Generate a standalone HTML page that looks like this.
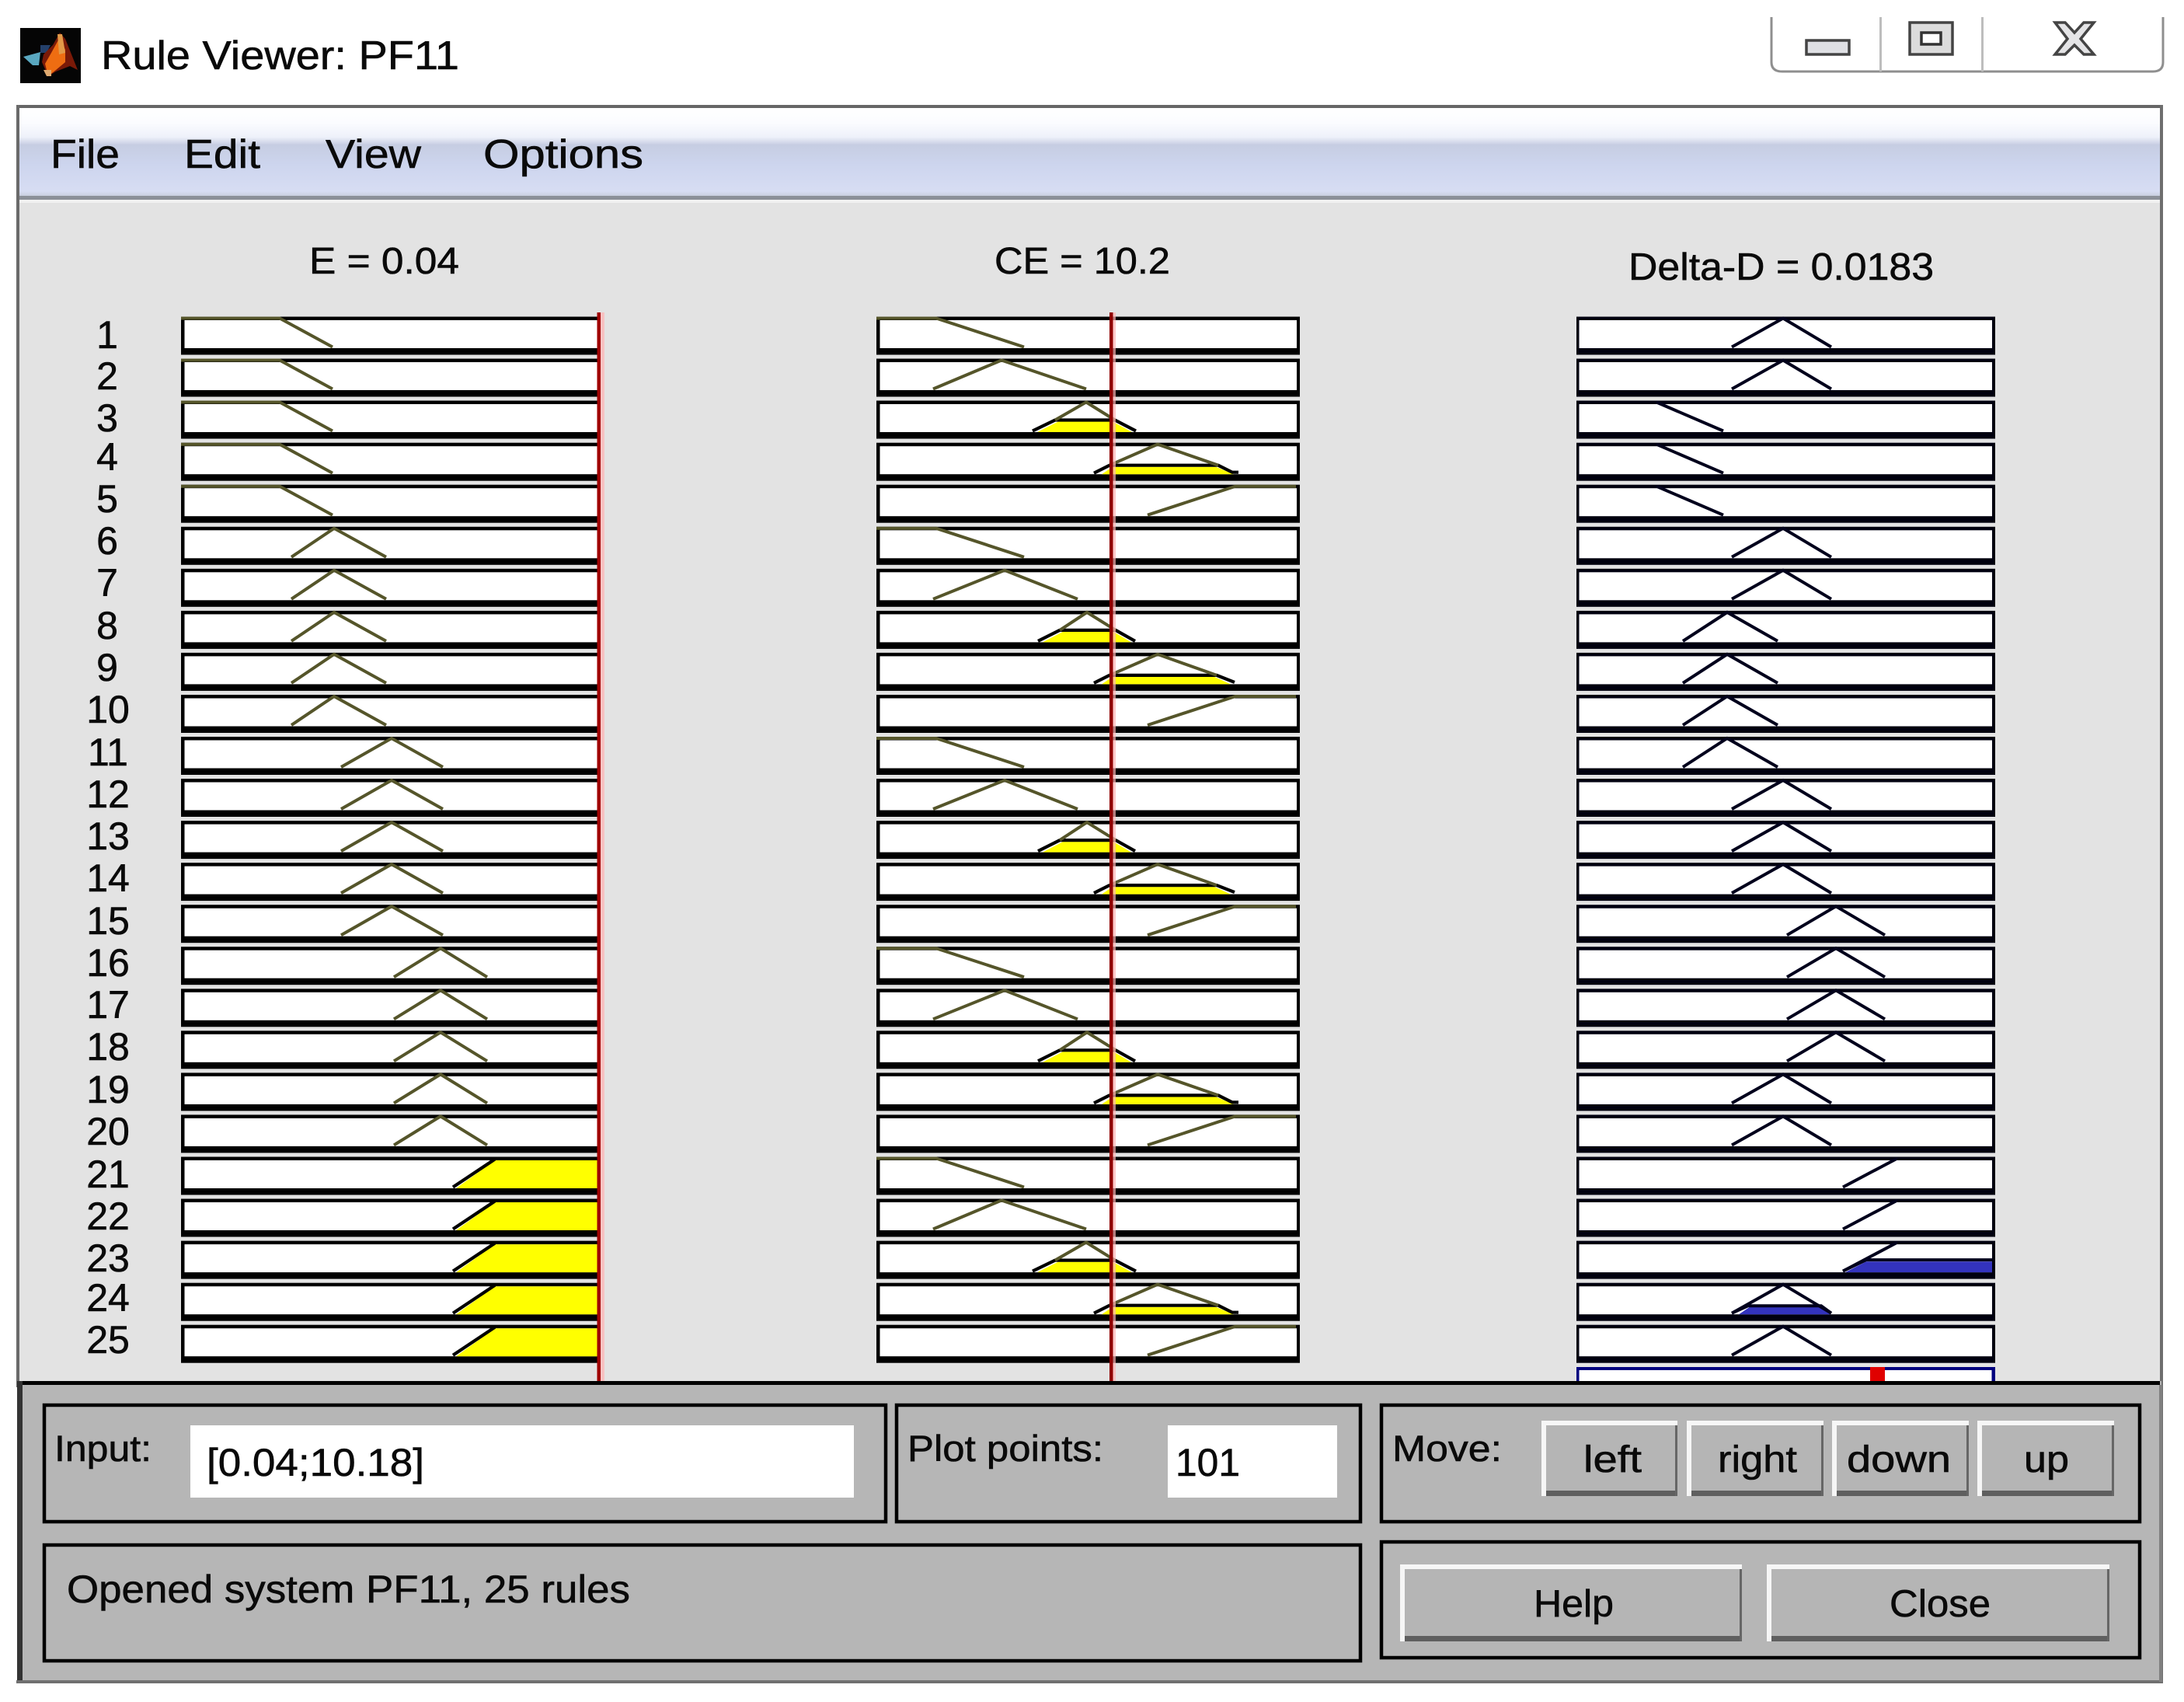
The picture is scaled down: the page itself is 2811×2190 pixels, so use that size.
<!DOCTYPE html>
<html>
<head>
<meta charset="utf-8">
<title>Rule Viewer: PF11</title>
<style>
html,body{margin:0;padding:0;background:#fff;width:2811px;height:2190px;overflow:hidden}
svg{display:block}
text{font-family:"Liberation Sans",sans-serif;fill:#0a0a0a;stroke:#0a0a0a;stroke-width:.6}
.ol{fill:none;stroke:#55552a;stroke-width:4;stroke-linejoin:miter}
.bk{fill:none;stroke:#000;stroke-width:4.2}
.nv{fill:none;stroke:#00001c;stroke-width:4}
.y{fill:#ffff00}
.b{fill:#3333bd}
.n{font-size:50px;text-anchor:middle}
</style>
</head>
<body>
<svg width="2811" height="2190" viewBox="0 0 2811 2190" xmlns="http://www.w3.org/2000/svg">
<defs>
<linearGradient id="menu" x1="0" y1="0" x2="0" y2="1">
<stop offset="0" stop-color="#ffffff"/>
<stop offset=".17" stop-color="#fbfcff"/>
<stop offset=".33" stop-color="#eef1fa"/>
<stop offset=".42" stop-color="#c6cde2"/>
<stop offset=".65" stop-color="#cdd5ee"/>
<stop offset=".95" stop-color="#d7ddf3"/>
<stop offset="1" stop-color="#c8cedd"/>
</linearGradient>
<g id="f">
<rect x="233" y="0" width="537" height="49" fill="#000"/><rect x="237.500" y="4.500" width="532" height="36" fill="#fff"/>
<rect x="1128" y="0" width="545" height="49" fill="#000"/><rect x="1132.500" y="4.500" width="536.500" height="36" fill="#fff"/>
<rect x="2029" y="0" width="539" height="49" fill="#00000f"/><rect x="2032.500" y="4.500" width="531.500" height="36" fill="#fff"/>
</g>
<polyline id="LZ" class="ol" points="233,2 360,2 428,39"/>
<polyline id="L1" class="ol" points="375,39 430,2 497,39"/>
<polyline id="L2" class="ol" points="439,39 504,2 570,39"/>
<polyline id="L3" class="ol" points="507,39 567,2 627,39"/>
<g id="L4"><polygon class="y" points="587,40.500 637,4.500 770,4.500 770,40.500"/><polyline class="bk" points="583,39 637,3"/></g>
<polyline id="MZ" class="ol" points="1128,2 1205,2 1318,39"/>
<polyline id="M2a" class="ol" points="1201,39 1289,2 1398,39"/>
<polyline id="M2b" class="ol" points="1201,39 1293,2 1387,39"/>
<g id="M3a"><polygon class="y" points="1335,40.500 1362,27 1432,27 1457,40.500"/><polyline class="bk" points="1329,39 1358,25 1435,25 1462,39"/><polyline class="ol" points="1358,25 1398,2 1435,25"/></g>
<g id="M3b"><polygon class="y" points="1342,40.500 1368,27 1433,27 1456,40.500"/><polyline class="bk" points="1336,39 1364,25 1436,25 1461,39"/><polyline class="ol" points="1364,25 1399,2 1436,25"/></g>
<g id="M4a"><polygon class="y" points="1418,40.500 1432,31 1565,31 1588,40.500"/><polyline class="bk" points="1408,39 1428,29 1568,29 1586,38 1594,38"/><polyline class="ol" points="1428,29 1490,2 1568,29"/></g>
<g id="M4b"><polygon class="y" points="1418,40.500 1432,31 1563,31 1584,40.500"/><polyline class="bk" points="1408,39 1428,29 1566,29 1589,38"/><polyline class="ol" points="1428,29 1490,2 1566,29"/></g>
<polyline id="M5" class="ol" points="1477,39 1590,2 1668,2"/>
<polyline id="RC" class="nv" points="2229,39 2295,2 2357,39"/>
<polyline id="RZ" class="nv" points="2132,2 2218,39"/>
<polyline id="RL" class="nv" points="2166,39 2223,2 2288,39"/>
<polyline id="RR" class="nv" points="2300,39 2363,2 2426,39"/>
<polyline id="RS" class="nv" points="2372,39 2442,2"/>
</defs>

<rect width="2811" height="2190" fill="#fff"/>

<!-- title bar -->
<rect x="26" y="36" width="78" height="71" fill="#050505"/>
<polygon points="52,58 65,58 60,68 52,68" fill="#24406a"/>
<polygon points="30,73 52,67 50,84 42,84" fill="#5aa8c0"/>
<polygon points="77,42 84,50 100,90 90,85 72,92 62,98 54,80 56,70 68,58" fill="#7a1a08"/>
<polygon points="77,48 84,64 84,80 72,90 62,98 58,82 66,68" fill="#ee6d12"/>
<polygon points="74,44 80,44 84,68 76,70" fill="#e29a48"/>
<polygon points="56,90 66,90 66,98 60,98" fill="#e0aa70"/>
<text x="130" y="89" font-size="52" textLength="461" lengthAdjust="spacingAndGlyphs">Rule Viewer: PF11</text>

<!-- window controls -->
<path d="M2280 22 V80 Q2280 92 2294 92 H2771 Q2784 92 2784 80 V22" fill="none" stroke="#8f8f8f" stroke-width="3"/>
<rect x="2419" y="22" width="3" height="70" fill="#bdbdbd"/>
<rect x="2550" y="22" width="3" height="70" fill="#bdbdbd"/>
<rect x="2325" y="52" width="55" height="18" fill="#dfe0e4" stroke="#444" stroke-width="3.5"/>
<rect x="2458" y="29" width="55" height="41" fill="#dcdcdc" stroke="#444" stroke-width="3.5"/>
<rect x="2473" y="42" width="25" height="15" fill="#fff" stroke="#333" stroke-width="3.5"/>
<path d="M2645 29 H2658 L2670 42 L2682 29 H2695 L2678 50 L2695 70 H2682 L2670 58 L2658 70 H2645 L2661 50 Z" fill="#e4e4e6" stroke="#444" stroke-width="3.5"/>

<!-- window -->
<rect x="23" y="137" width="2759" height="2027" fill="#e3e3e3"/>
<rect x="25" y="139" width="2755" height="113" fill="url(#menu)"/>
<rect x="23" y="252" width="2759" height="5" fill="#8b9098"/>
<rect x="25" y="257" width="2755" height="4" fill="#f1f1f1"/>
<rect x="21" y="135" width="2763" height="4" fill="#666"/>
<rect x="21" y="135" width="4" height="1650" fill="#6a6a6a"/>
<rect x="2780" y="135" width="4" height="2031" fill="#6e6e6e"/>

<text x="65" y="216" font-size="52" textLength="89" lengthAdjust="spacingAndGlyphs">File</text>
<text x="237" y="216" font-size="52" textLength="98" lengthAdjust="spacingAndGlyphs">Edit</text>
<text x="419" y="216" font-size="52" textLength="123" lengthAdjust="spacingAndGlyphs">View</text>
<text x="622" y="216" font-size="52" textLength="206" lengthAdjust="spacingAndGlyphs">Options</text>

<text x="398" y="352" font-size="48" textLength="193" lengthAdjust="spacingAndGlyphs">E = 0.04</text>
<text x="1280" y="352" font-size="48" textLength="226" lengthAdjust="spacingAndGlyphs">CE = 10.2</text>
<text x="2096" y="360" font-size="49" textLength="393" lengthAdjust="spacingAndGlyphs">Delta-D = 0.0183</text>

<!-- rule numbers -->
<text class="n" x="138" y="448">1</text>
<text class="n" x="138" y="501">2</text>
<text class="n" x="138" y="555">3</text>
<text class="n" x="138" y="605">4</text>
<text class="n" x="138" y="659">5</text>
<text class="n" x="138" y="713">6</text>
<text class="n" x="138" y="767">7</text>
<text class="n" x="138" y="822">8</text>
<text class="n" x="138" y="876">9</text>
<text class="n" x="139" y="930">10</text>
<text class="n" x="139" y="985">11</text>
<text class="n" x="139" y="1039">12</text>
<text class="n" x="139" y="1093">13</text>
<text class="n" x="139" y="1147">14</text>
<text class="n" x="139" y="1202">15</text>
<text class="n" x="139" y="1256">16</text>
<text class="n" x="139" y="1310">17</text>
<text class="n" x="139" y="1364">18</text>
<text class="n" x="139" y="1419">19</text>
<text class="n" x="139" y="1473">20</text>
<text class="n" x="139" y="1528">21</text>
<text class="n" x="139" y="1582">22</text>
<text class="n" x="139" y="1636">23</text>
<text class="n" x="139" y="1687">24</text>
<text class="n" x="139" y="1741">25</text>

<!-- rows -->
<g transform="translate(0,407.500)"><use href="#f"/><use href="#LZ"/><use href="#MZ"/><use href="#RC"/></g>
<g transform="translate(0,461.500)"><use href="#f"/><use href="#LZ"/><use href="#M2a"/><use href="#RC"/></g>
<g transform="translate(0,515.500)"><use href="#f"/><use href="#LZ"/><use href="#M3a"/><use href="#RZ"/></g>
<g transform="translate(0,569.700)"><use href="#f"/><use href="#LZ"/><use href="#M4a"/><use href="#RZ"/></g>
<g transform="translate(0,623.700)"><use href="#f"/><use href="#LZ"/><use href="#M5"/><use href="#RZ"/></g>
<g transform="translate(0,677.800)"><use href="#f"/><use href="#L1"/><use href="#MZ"/><use href="#RC"/></g>
<g transform="translate(0,731.800)"><use href="#f"/><use href="#L1"/><use href="#M2b"/><use href="#RC"/></g>
<g transform="translate(0,785.900)"><use href="#f"/><use href="#L1"/><use href="#M3b"/><use href="#RL"/></g>
<g transform="translate(0,839.900)"><use href="#f"/><use href="#L1"/><use href="#M4b"/><use href="#RL"/></g>
<g transform="translate(0,894)"><use href="#f"/><use href="#L1"/><use href="#M5"/><use href="#RL"/></g>
<g transform="translate(0,948)"><use href="#f"/><use href="#L2"/><use href="#MZ"/><use href="#RL"/></g>
<g transform="translate(0,1002)"><use href="#f"/><use href="#L2"/><use href="#M2b"/><use href="#RC"/></g>
<g transform="translate(0,1056.100)"><use href="#f"/><use href="#L2"/><use href="#M3b"/><use href="#RC"/></g>
<g transform="translate(0,1110.100)"><use href="#f"/><use href="#L2"/><use href="#M4b"/><use href="#RC"/></g>
<g transform="translate(0,1164.200)"><use href="#f"/><use href="#L2"/><use href="#M5"/><use href="#RR"/></g>
<g transform="translate(0,1218.200)"><use href="#f"/><use href="#L3"/><use href="#MZ"/><use href="#RR"/></g>
<g transform="translate(0,1272.300)"><use href="#f"/><use href="#L3"/><use href="#M2b"/><use href="#RR"/></g>
<g transform="translate(0,1326.300)"><use href="#f"/><use href="#L3"/><use href="#M3b"/><use href="#RR"/></g>
<g transform="translate(0,1380.400)"><use href="#f"/><use href="#L3"/><use href="#M4a"/><use href="#RC"/></g>
<g transform="translate(0,1434.400)"><use href="#f"/><use href="#L3"/><use href="#M5"/><use href="#RC"/></g>
<g transform="translate(0,1488.500)"><use href="#f"/><use href="#L4"/><use href="#MZ"/><use href="#RS"/></g>
<g transform="translate(0,1542.500)"><use href="#f"/><use href="#L4"/><use href="#M2a"/><use href="#RS"/></g>
<g transform="translate(0,1596.600)"><use href="#f"/><use href="#L4"/><use href="#M3a"/><polygon class="b" points="2375,40.500 2402,26.700 2564,26.700 2564,40.500"/><polyline class="nv" points="2372,39 2402,24.500 2564,24.500"/><use href="#RS"/></g>
<g transform="translate(0,1650.700)"><use href="#f"/><use href="#L4"/><use href="#M4a"/><polygon class="b" points="2238,40.500 2252,31 2342,31 2356,40.500"/><polyline class="nv" points="2229,39 2250,29.500 2344,29.500 2357,39"/><use href="#RC"/></g>
<g transform="translate(0,1704.700)"><use href="#f"/><use href="#L4"/><use href="#M5"/><use href="#RC"/></g>

<!-- output row -->
<rect x="2029" y="1759" width="539" height="21" fill="#00007f"/>
<rect x="2032.500" y="1763" width="531" height="17" fill="#fff"/>
<rect x="2407" y="1759" width="19" height="21" fill="#e00000"/>

<!-- red input lines -->
<rect x="773" y="402" width="5" height="1376" fill="#ffb4b4" opacity=".7"/>
<rect x="1432" y="402" width="4" height="1376" fill="#ffb4b4" opacity=".7"/>
<rect x="768.500" y="402" width="4.500" height="1376" fill="#a00000"/>
<rect x="1428" y="402" width="4.500" height="1376" fill="#900000"/>

<!-- bottom panel -->
<rect x="23" y="1777" width="2759" height="387" fill="#b6b6b6"/>
<rect x="23" y="1777" width="2757" height="5" fill="#000"/>
<rect x="22" y="1777" width="7" height="387" fill="#333"/>
<rect x="21" y="2162" width="2763" height="4" fill="#707070"/>
<rect x="2779" y="1782" width="4" height="382" fill="#808080"/>

<g fill="none" stroke="#000" stroke-width="4.5">
<rect x="57" y="1808" width="1083" height="150"/>
<rect x="1154" y="1808" width="597" height="150"/>
<rect x="1778" y="1808" width="976" height="150"/>
<rect x="57" y="1988" width="1694" height="149"/>
<rect x="1778" y="1984" width="976" height="149"/>
</g>

<rect x="245" y="1834" width="854" height="93" fill="#fff"/>
<rect x="1503" y="1834" width="218" height="93" fill="#fff"/>

<text x="70" y="1880" font-size="47" textLength="125" lengthAdjust="spacingAndGlyphs">Input:</text>
<text x="266" y="1899" font-size="50" textLength="280" lengthAdjust="spacingAndGlyphs">[0.04;10.18]</text>
<text x="1168" y="1880" font-size="47" textLength="252" lengthAdjust="spacingAndGlyphs">Plot points:</text>
<text x="1513" y="1899" font-size="50" textLength="83" lengthAdjust="spacingAndGlyphs">101</text>
<text x="1792" y="1880" font-size="47" textLength="141" lengthAdjust="spacingAndGlyphs">Move:</text>
<text x="86" y="2062" font-size="50" textLength="725" lengthAdjust="spacingAndGlyphs">Opened system PF11, 25 rules</text>

<!-- buttons -->
<g>
<rect x="1984" y="1828" width="175" height="97" fill="#f6f6f6"/><rect x="1990" y="1918" width="169" height="7" fill="#5f5f5f"/><rect x="2156" y="1834" width="3" height="91" fill="#666"/><rect x="1990" y="1834" width="166" height="84" fill="#b5b5b5"/>
<rect x="2171" y="1828" width="176" height="97" fill="#f6f6f6"/><rect x="2177" y="1918" width="170" height="7" fill="#5f5f5f"/><rect x="2344" y="1834" width="3" height="91" fill="#666"/><rect x="2177" y="1834" width="167" height="84" fill="#b5b5b5"/>
<rect x="2358" y="1828" width="176" height="97" fill="#f6f6f6"/><rect x="2364" y="1918" width="170" height="7" fill="#5f5f5f"/><rect x="2531" y="1834" width="3" height="91" fill="#666"/><rect x="2364" y="1834" width="167" height="84" fill="#b5b5b5"/>
<rect x="2545" y="1828" width="176" height="97" fill="#f6f6f6"/><rect x="2551" y="1918" width="170" height="7" fill="#5f5f5f"/><rect x="2718" y="1834" width="3" height="91" fill="#666"/><rect x="2551" y="1834" width="167" height="84" fill="#b5b5b5"/>
<rect x="1802" y="2013" width="440" height="99" fill="#f6f6f6"/><rect x="1808" y="2105" width="434" height="7" fill="#5f5f5f"/><rect x="2239" y="2019" width="3" height="93" fill="#666"/><rect x="1808" y="2019" width="431" height="86" fill="#b5b5b5"/>
<rect x="2274" y="2013" width="441" height="99" fill="#f6f6f6"/><rect x="2280" y="2105" width="435" height="7" fill="#5f5f5f"/><rect x="2712" y="2019" width="3" height="93" fill="#666"/><rect x="2280" y="2019" width="432" height="86" fill="#b5b5b5"/>
</g>
<text x="2038" y="1894" font-size="48" textLength="75" lengthAdjust="spacingAndGlyphs">left</text>
<text x="2211" y="1894" font-size="48" textLength="102" lengthAdjust="spacingAndGlyphs">right</text>
<text x="2377" y="1894" font-size="48" textLength="134" lengthAdjust="spacingAndGlyphs">down</text>
<text x="2605" y="1894" font-size="48" textLength="58" lengthAdjust="spacingAndGlyphs">up</text>
<text x="1974" y="2080" font-size="49" textLength="103" lengthAdjust="spacingAndGlyphs">Help</text>
<text x="2432" y="2080" font-size="49" textLength="130" lengthAdjust="spacingAndGlyphs">Close</text>
</svg>
</body>
</html>
